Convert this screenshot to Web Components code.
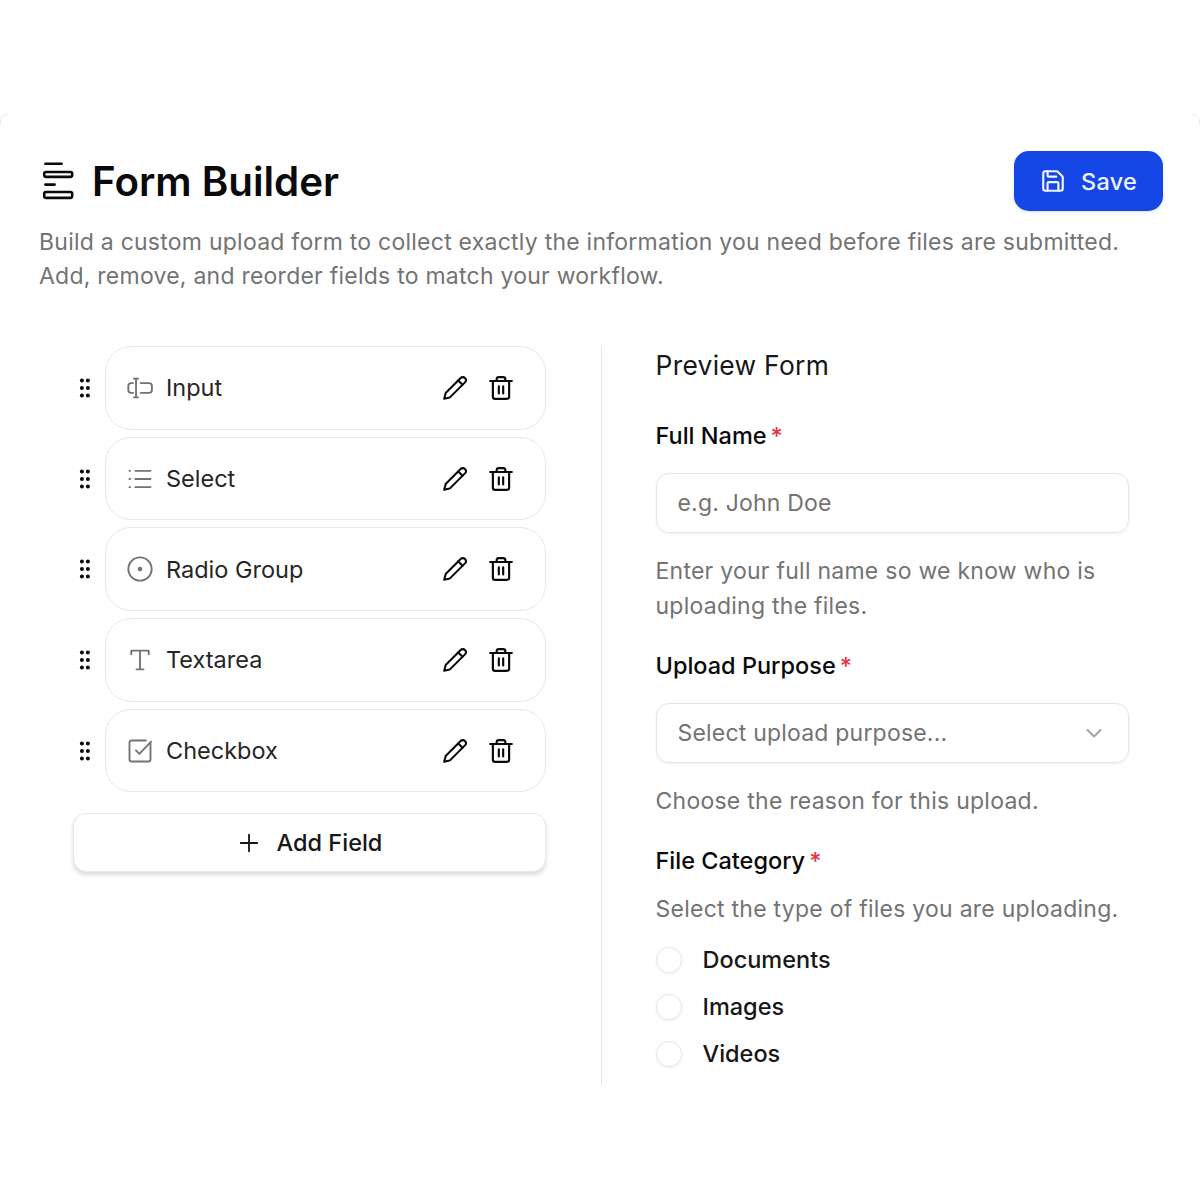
<!DOCTYPE html>
<html>
<head>
<meta charset="utf-8">
<title>Form Builder</title>
<style>
  html, body { margin: 0; background: #fff; }
  body { font-family: Inter, "Liberation Sans", sans-serif; color: #0a0a0a; }
</style>
</head>
<body>
<fb-panel>
  <fb-header slot="header" title="Form Builder">
    Build a custom upload form to collect exactly the information you need before files are submitted. Add, remove, and reorder fields to match your workflow.
  </fb-header>
  <fb-fields slot="left">
    <fb-row icon="input">Input</fb-row>
    <fb-row icon="select">Select</fb-row>
    <fb-row icon="radio">Radio Group</fb-row>
    <fb-row icon="text">Textarea</fb-row>
    <fb-row icon="check">Checkbox</fb-row>
  </fb-fields>
  <fb-preview slot="right" title="Preview Form">
    <fb-control label="Full Name" placeholder="e.g. John Doe">Enter your full name so we know who is uploading the files.</fb-control>
    <fb-control label="Upload Purpose" placeholder="Select upload purpose..." kind="select">Choose the reason for this upload.</fb-control>
    <fb-radios label="File Category" help="Select the type of files you are uploading.">
      <fb-radio>Documents</fb-radio>
      <fb-radio>Images</fb-radio>
      <fb-radio>Videos</fb-radio>
    </fb-radios>
  </fb-preview>
</fb-panel>

<script>
const ICONS = {
  input: `<path d="M8.6 4v16M6.8 4h3.6M6.8 20h3.6"/><path d="M6 7.8H4.4A2.4 2.4 0 0 0 2 10.2v3.6a2.4 2.4 0 0 0 2.4 2.4H6"/><path d="M12.6 7.8h7.2a2.4 2.4 0 0 1 2.4 2.4v3.6a2.4 2.4 0 0 1-2.4 2.4h-7.2"/>`,
  select: `<path d="M8 5h13M8 12h13M8 19h13"/><path d="M3 5h.5M3 12h.5M3 19h.5"/>`,
  radio: `<circle cx="12" cy="12" r="10"/><circle cx="12" cy="12" r="1.2" fill="currentColor"/>`,
  text: `<path d="M4.5 7V4h15v3M12 4v16M9 20h6"/>`,
  check: `<path d="M21 5.5V19a2 2 0 0 1-2 2H5a2 2 0 0 1-2-2V5a2 2 0 0 1 2-2h12"/><path d="M8.5 11.5l3 3L21.5 4"/>`
};

class FbPanel extends HTMLElement {
  constructor() {
    super();
    this.attachShadow({ mode: "open" });
    this.shadowRoot.innerHTML = `
      <style>
        :host { display: block; position: relative; margin-top: 113px; padding: 38px 37px 0 39px; height: 1049px; box-sizing: border-box; }
        .corner { position: absolute; top: 0; width: 9px; height: 12px; border-top: 1.5px solid #ececec; box-sizing: border-box; }
        .corner.l { left: 0; border-left: 1.5px solid #ececec; border-top-left-radius: 12px; }
        .corner.r { right: 0; border-right: 1.5px solid #ececec; border-top-right-radius: 12px; }
        .cols { display: flex; margin-top: 53px; }
        .left { width: 473px; margin-left: 34px; flex: none; }
        .right { margin-left: 54.5px; border-left: 1.5px solid #e5e5e5; padding-left: 54px; width: 473px; flex: none; height: 739px; }
      </style>
      <div class="corner l"></div>
      <div class="corner r"></div>
      <slot name="header"></slot>
      <div class="cols">
        <div class="left"><slot name="left"></slot></div>
        <div class="right"><slot name="right"></slot></div>
      </div>`;
  }
}

class FbHeader extends HTMLElement {
  constructor() {
    super();
    this.attachShadow({ mode: "open" });
    this.shadowRoot.innerHTML = `
      <style>
        :host { display: block; }
        .top { display: flex; align-items: center; justify-content: space-between; height: 60px; }
        .name { display: flex; align-items: center; gap: 18px; margin-left: 3px; }
        h1 { margin: 2px 0 0; font-size: 40.3px; font-weight: 600; line-height: 58px; color: #0a0a0a; letter-spacing: 0; }
        button { display: flex; align-items: center; gap: 15px; width: 149px; height: 60px; justify-content: center; border: 0; border-radius: 15px; background: #1447e6; color: #eff4ff; font: 500 23.5px Inter, sans-serif; box-shadow: 0 1px 3px rgba(0,0,0,.15); padding: 0; letter-spacing: .2px; }
        p { margin: 14px 0 0; font-size: 23px; line-height: 34px; color: #737373; width: 1110px; letter-spacing: .24px; }
      </style>
      <div class="top">
        <div class="name">
          <svg width="32" height="40" viewBox="0 0 32 40" fill="none" stroke="#0a0a0a" stroke-width="2.6" stroke-linecap="round" stroke-linejoin="round">
            <path d="M3.4 2.8h16.2M3.4 23.6h9.2"/>
            <rect x="2.2" y="11" width="28" height="4.9" rx="1.8"/>
            <rect x="2.2" y="31" width="28" height="5.9" rx="1.8"/>
          </svg>
          <h1></h1>
        </div>
        <button>
          <svg width="26" height="26" viewBox="0 0 24 24" fill="none" stroke="currentColor" stroke-width="2" stroke-linecap="round" stroke-linejoin="round">
            <path d="M15.2 3a2 2 0 0 1 1.4.6l3.8 3.8a2 2 0 0 1 .6 1.4V19a2 2 0 0 1-2 2H5a2 2 0 0 1-2-2V5a2 2 0 0 1 2-2z"/>
            <path d="M17 21v-7a1 1 0 0 0-1-1H8a1 1 0 0 0-1 1v7"/>
            <path d="M7 3v4a1 1 0 0 0 1 1h7"/>
          </svg>
          Save
        </button>
      </div>
      <p><slot></slot></p>`;
    this.shadowRoot.querySelector("h1").textContent = this.getAttribute("title");
  }
}

class FbFields extends HTMLElement {
  constructor() {
    super();
    this.attachShadow({ mode: "open" });
    this.shadowRoot.innerHTML = `
      <style>
        :host { display: block; }
        .list { display: flex; flex-direction: column; gap: 7px; }
        button { display: flex; align-items: center; justify-content: center; gap: 17px; box-sizing: border-box; width: 473px; height: 59px; margin-top: 21px; background: #fff; border: 1.5px solid #e8e8e8; border-radius: 13px; box-shadow: 0 3px 4px rgba(0,0,0,.14); color: #171717; font: 500 23.5px Inter, sans-serif; padding: 0; }
        svg { margin-left: 1px; }
      </style>
      <div class="list"><slot></slot></div>
      <button>
        <svg width="22" height="22" viewBox="0 0 24 24" fill="none" stroke="currentColor" stroke-width="2" stroke-linecap="round"><path d="M3 12h18M12 3v18"/></svg>
        Add Field
      </button>`;
  }
}

class FbRow extends HTMLElement {
  constructor() {
    super();
    const icon = ICONS[this.getAttribute("icon")];
    this.attachShadow({ mode: "open" });
    this.shadowRoot.innerHTML = `
      <style>
        :host { display: flex; align-items: center; height: 83.7px; }
        .grip { width: 32px; display: flex; flex: none; padding-left: 6px; box-sizing: border-box; }
        .box { flex: 1; height: 100%; box-sizing: border-box; display: flex; align-items: center; border: 1.5px solid #e8e8e8; border-radius: 26px; padding: 0 31px 0 19.5px; background: #fff; }
        .icon { color: #737373; display: flex; margin-right: 12.5px; }
        .label { flex: 1; font-size: 23.5px; color: #262626; }
        .actions { display: flex; gap: 20px; color: #0a0a0a; }
      </style>
      <div class="grip">
        <svg width="13" height="20" viewBox="0 0 13 20" fill="#0a0a0a"><circle cx="2.9" cy="2.6" r="2"/><circle cx="8.9" cy="2.6" r="2"/><circle cx="2.9" cy="10" r="2"/><circle cx="8.9" cy="10" r="2"/><circle cx="2.9" cy="17.4" r="2"/><circle cx="8.9" cy="17.4" r="2"/></svg>
      </div>
      <div class="box">
        <span class="icon"><svg width="28" height="28" viewBox="0 0 24 24" fill="none" stroke="currentColor" stroke-width="1.6" stroke-linecap="round" stroke-linejoin="round">${icon}</svg></span>
        <span class="label"><slot></slot></span>
        <span class="actions">
          <svg width="26" height="26" viewBox="0 0 24 24" fill="none" stroke="currentColor" stroke-width="1.9" stroke-linecap="round" stroke-linejoin="round"><path d="M21.2 6.8a2.8 2.8 0 0 0-4-4L3.8 16.2a2 2 0 0 0-.5.8l-1.3 5 5-1.3a2 2 0 0 0 .8-.5z"/><path d="M15 5l4 4"/></svg>
          <svg width="26" height="26" viewBox="0 0 24 24" fill="none" stroke="currentColor" stroke-width="2" stroke-linecap="round" stroke-linejoin="round"><path d="M2 5.5h20"/><path d="M4.5 5.5V20a2 2 0 0 0 2 2h11a2 2 0 0 0 2-2V5.5"/><path d="M8 5.5V4a2 2 0 0 1 2-2h4a2 2 0 0 1 2 2v1.5"/><path d="M10 10.5v6.5M14 10.5v6.5"/></svg>
        </span>
      </div>`;
  }
}

const LABEL_CSS = `
  .label { font-size: 23.5px; font-weight: 450; line-height: 32px; color: #0a0a0a; }
  .label i { font-style: normal; color: #e7333f; margin-left: 4px; }
  .help { font-size: 23px; line-height: 35px; color: #737373; letter-spacing: .25px; }
`;

class FbPreview extends HTMLElement {
  constructor() {
    super();
    this.attachShadow({ mode: "open" });
    this.shadowRoot.innerHTML = `
      <style>
        :host { display: block; }
        h2 { margin: 0 0 35px; font-size: 26.4px; font-weight: 400; line-height: 39px; color: #171717; letter-spacing: .28px; }
      </style>
      <h2></h2>
      <slot></slot>`;
    this.shadowRoot.querySelector("h2").textContent = this.getAttribute("title");
  }
}

class FbControl extends HTMLElement {
  constructor() {
    super();
    const chevron = this.getAttribute("kind") === "select"
      ? `<svg width="24" height="24" viewBox="0 0 24 24" fill="none" stroke="#a3a3a3" stroke-width="2" stroke-linecap="round" stroke-linejoin="round"><path d="M5.5 9l6.5 6.5L18.5 9"/></svg>`
      : "";
    this.attachShadow({ mode: "open" });
    this.shadowRoot.innerHTML = `
      <style>
        :host { display: block; margin-bottom: 26px; }
        ${LABEL_CSS}
        .box { display: flex; align-items: center; justify-content: space-between; box-sizing: border-box; height: 60px; margin: 21px 0 21px; padding: 0 22px 0 21px; border: 1.5px solid #e5e5e5; border-radius: 13px; box-shadow: 0 1px 3px rgba(0,0,0,.07); font-size: 23px; letter-spacing: .2px; color: #737373; }
      </style>
      <div class="label"></div>
      <div class="box"><span class="ph"></span>${chevron}</div>
      <div class="help"><slot></slot></div>`;
    this.shadowRoot.querySelector(".label").innerHTML = `${this.getAttribute("label")}<i>*</i>`;
    this.shadowRoot.querySelector(".ph").textContent = this.getAttribute("placeholder");
  }
}

class FbRadios extends HTMLElement {
  constructor() {
    super();
    this.attachShadow({ mode: "open" });
    this.shadowRoot.innerHTML = `
      <style>
        :host { display: block; }
        ${LABEL_CSS}
        .help { margin-top: 15px; }
        .list { display: flex; flex-direction: column; gap: 20px; margin-top: 19px; }
      </style>
      <div class="label"></div>
      <div class="help"></div>
      <div class="list"><slot></slot></div>`;
    this.shadowRoot.querySelector(".label").innerHTML = `${this.getAttribute("label")}<i>*</i>`;
    this.shadowRoot.querySelector(".help").textContent = this.getAttribute("help");
  }
}

class FbRadio extends HTMLElement {
  constructor() {
    super();
    this.attachShadow({ mode: "open" });
    this.shadowRoot.innerHTML = `
      <style>
        :host { display: flex; align-items: center; gap: 21px; height: 27px; font-size: 23.5px; font-weight: 450; color: #171717; }
        .dot { width: 26px; height: 26px; box-sizing: border-box; border: 1.5px solid #e5e5e5; border-radius: 50%; box-shadow: 0 1px 3px rgba(0,0,0,.07); }
      </style>
      <span class="dot"></span><span><slot></slot></span>`;
  }
}

customElements.define("fb-panel", FbPanel);
customElements.define("fb-header", FbHeader);
customElements.define("fb-fields", FbFields);
customElements.define("fb-row", FbRow);
customElements.define("fb-preview", FbPreview);
customElements.define("fb-control", FbControl);
customElements.define("fb-radios", FbRadios);
customElements.define("fb-radio", FbRadio);
</script>
</body>
</html>
